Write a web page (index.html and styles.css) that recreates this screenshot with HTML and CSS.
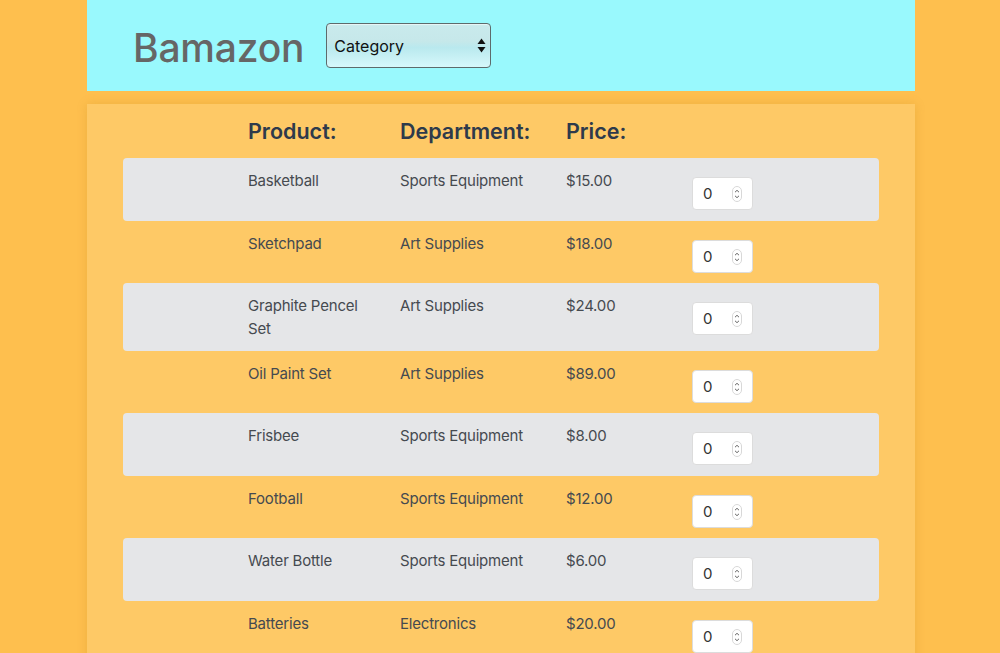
FILE: index.html
```html
<!DOCTYPE html>
<html>
<head>
<meta charset="utf-8">
<link rel="stylesheet" href="styles.css">
</head>
<body>
<div class="page">
  <header class="topbar">
    <h1 class="brand">Bamazon</h1>
    <div class="select-wrap">
      <select class="category">
        <option>Category</option>
      </select>
      <svg class="select-arrows" width="9" height="15" viewBox="0 0 9 15"><path d="M4.5 0.5 L8.5 6 L0.5 6 Z" fill="#111"/><path d="M0.5 9 L8.5 9 L4.5 14.5 Z" fill="#111"/></svg>
    </div>
  </header>
  <main class="panel">
    <div class="row head">
      <span></span>
      <span>Product:</span>
      <span>Department:</span>
      <span>Price:</span>
      <span></span>
    </div>
    <div class="row shade"><span></span><span class="name">Basketball</span><span>Sports Equipment</span><span>$15.00</span><span class="qty"><input type="number" value="0"><svg class="spin" width="10" height="16" viewBox="0 0 10 16"><rect x="0.5" y="0.5" width="9" height="15" rx="4.5" fill="#fff" stroke="#d8d8d8"/><path d="M3 6.2 L5 4.3 L7 6.2 M3 9.8 L5 11.7 L7 9.8" fill="none" stroke="#555" stroke-width="0.9"/></svg></span></div>
    <div class="row"><span></span><span class="name">Sketchpad</span><span>Art Supplies</span><span>$18.00</span><span class="qty"><input type="number" value="0"><svg class="spin" width="10" height="16" viewBox="0 0 10 16"><rect x="0.5" y="0.5" width="9" height="15" rx="4.5" fill="#fff" stroke="#d8d8d8"/><path d="M3 6.2 L5 4.3 L7 6.2 M3 9.8 L5 11.7 L7 9.8" fill="none" stroke="#555" stroke-width="0.9"/></svg></span></div>
    <div class="row shade"><span></span><span class="name">Graphite Pencel Set</span><span>Art Supplies</span><span>$24.00</span><span class="qty"><input type="number" value="0"><svg class="spin" width="10" height="16" viewBox="0 0 10 16"><rect x="0.5" y="0.5" width="9" height="15" rx="4.5" fill="#fff" stroke="#d8d8d8"/><path d="M3 6.2 L5 4.3 L7 6.2 M3 9.8 L5 11.7 L7 9.8" fill="none" stroke="#555" stroke-width="0.9"/></svg></span></div>
    <div class="row"><span></span><span class="name">Oil Paint Set</span><span>Art Supplies</span><span>$89.00</span><span class="qty"><input type="number" value="0"><svg class="spin" width="10" height="16" viewBox="0 0 10 16"><rect x="0.5" y="0.5" width="9" height="15" rx="4.5" fill="#fff" stroke="#d8d8d8"/><path d="M3 6.2 L5 4.3 L7 6.2 M3 9.8 L5 11.7 L7 9.8" fill="none" stroke="#555" stroke-width="0.9"/></svg></span></div>
    <div class="row shade"><span></span><span class="name">Frisbee</span><span>Sports Equipment</span><span>$8.00</span><span class="qty"><input type="number" value="0"><svg class="spin" width="10" height="16" viewBox="0 0 10 16"><rect x="0.5" y="0.5" width="9" height="15" rx="4.5" fill="#fff" stroke="#d8d8d8"/><path d="M3 6.2 L5 4.3 L7 6.2 M3 9.8 L5 11.7 L7 9.8" fill="none" stroke="#555" stroke-width="0.9"/></svg></span></div>
    <div class="row"><span></span><span class="name">Football</span><span>Sports Equipment</span><span>$12.00</span><span class="qty"><input type="number" value="0"><svg class="spin" width="10" height="16" viewBox="0 0 10 16"><rect x="0.5" y="0.5" width="9" height="15" rx="4.5" fill="#fff" stroke="#d8d8d8"/><path d="M3 6.2 L5 4.3 L7 6.2 M3 9.8 L5 11.7 L7 9.8" fill="none" stroke="#555" stroke-width="0.9"/></svg></span></div>
    <div class="row shade"><span></span><span class="name">Water Bottle</span><span>Sports Equipment</span><span>$6.00</span><span class="qty"><input type="number" value="0"><svg class="spin" width="10" height="16" viewBox="0 0 10 16"><rect x="0.5" y="0.5" width="9" height="15" rx="4.5" fill="#fff" stroke="#d8d8d8"/><path d="M3 6.2 L5 4.3 L7 6.2 M3 9.8 L5 11.7 L7 9.8" fill="none" stroke="#555" stroke-width="0.9"/></svg></span></div>
    <div class="row"><span></span><span class="name">Batteries</span><span>Electronics</span><span>$20.00</span><span class="qty"><input type="number" value="0"><svg class="spin" width="10" height="16" viewBox="0 0 10 16"><rect x="0.5" y="0.5" width="9" height="15" rx="4.5" fill="#fff" stroke="#d8d8d8"/><path d="M3 6.2 L5 4.3 L7 6.2 M3 9.8 L5 11.7 L7 9.8" fill="none" stroke="#555" stroke-width="0.9"/></svg></span></div>
  </main>
</div>
</body>
</html>
```
FILE: styles.css
```css
html, body {
  margin: 0;
  padding: 0;
  height: 100%;
  overflow: hidden;
}
body {
  background: #febf4e;
  font-family: Inter, "Liberation Sans", sans-serif;
  color: #454a50;
}
.page {
  width: 828px;
  margin: 0 0 0 87px;
}
.topbar {
  background: #99f9fd;
  height: 91px;
  display: flex;
  align-items: center;
  padding-left: 46px;
  box-sizing: border-box;
}
.brand {
  margin: 0 22px 0 0;
  font-size: 39px;
  font-weight: 500;
  color: #666666;
  letter-spacing: -0.2px;
  line-height: 1;
  padding-top: 4px;
}
.select-wrap {
  position: relative;
  width: 165px;
  height: 45px;
}
.category {
  -webkit-appearance: none;
  appearance: none;
  width: 165px;
  height: 45px;
  border: 1px solid #5d6b6c;
  border-radius: 4px;
  background: linear-gradient(to bottom, #c9eaec 0%, #c6e8ea 40%, #b9e9ee 55%, #d6f8fb 100%);
  font-family: Inter, "Liberation Sans", sans-serif;
  font-size: 16px;
  color: #111;
  padding: 0 0 0 7px;
  box-shadow: inset 0 1px 1px rgba(255,255,255,0.6);
}
.select-arrows {
  position: absolute;
  right: 5px;
  top: 15px;
}
.panel {
  margin-top: 13px;
  background: #fec966;
  padding: 12px 36px 40px;
  box-shadow: 0 0 10px rgba(160, 110, 0, 0.18);
  min-height: 600px;
}
.row {
  display: grid;
  grid-template-columns: 125px 152px 166px 126px 1fr;
  padding: 12px 0 10.5px;
  font-size: 15px;
  line-height: 22.5px;
  letter-spacing: -0.2px;
  border-radius: 4px;
}
.row .name {
  padding-right: 20px;
}
.row.head {
  padding: 0;
  margin-bottom: 12px;
  font-size: 21.5px;
  font-weight: 600;
  line-height: 30px;
  letter-spacing: 0;
  color: #2e3a4b;
}
.row.shade {
  background: #e5e6e8;
}
.qty {
  position: relative;
  width: 61px;
  height: 33px;
  margin-top: 7px;
}
.qty input {
  box-sizing: border-box;
  width: 61px;
  height: 33px;
  border: 1px solid #dcdcdc;
  border-radius: 4px;
  background: #fff;
  font-family: Inter, "Liberation Sans", sans-serif;
  font-size: 15px;
  color: #333;
  padding: 0 0 0 10px;
  margin: 0;
  -moz-appearance: textfield;
}
.qty input::-webkit-inner-spin-button,
.qty input::-webkit-outer-spin-button {
  -webkit-appearance: none;
  margin: 0;
}
.spin {
  position: absolute;
  left: 40px;
  top: 9px;
}
```
